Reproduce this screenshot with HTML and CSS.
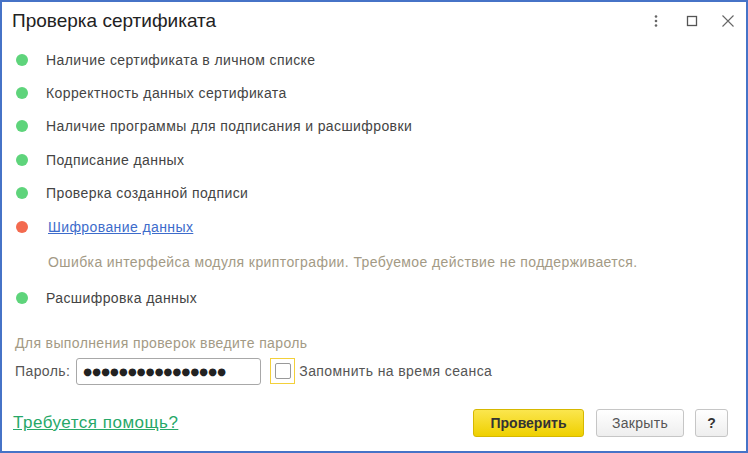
FILE: index.html
```html
<!DOCTYPE html>
<html lang="ru">
<head>
  <meta charset="UTF-8" />
  <title>Проверка сертификата</title>
  <link rel="stylesheet" href="styles.css">
</head>
<body>
  <div class="window">
    <div class="header">
      <h1>Проверка сертификата</h1>
      <div class="header-tools">
        <svg class="tool" width="14" height="14" viewBox="0 0 14 14">
          <circle cx="7" cy="2.5" r="1.3" fill="#666" />
          <circle cx="7" cy="7" r="1.3" fill="#666" />
          <circle cx="7" cy="11.5" r="1.3" fill="#666" />
        </svg>
        <svg class="tool" width="14" height="14" viewBox="0 0 14 14">
          <rect x="2.5" y="2.5" width="9" height="9" fill="none" stroke="#555" stroke-width="1.3" />
        </svg>
        <svg class="tool" width="14" height="14" viewBox="0 0 14 14">
          <path d="M1.5 1.5 L12.5 12.5 M12.5 1.5 L1.5 12.5" stroke="#666" stroke-width="1.1" />
        </svg>
      </div>
    </div>

    <div class="checks">
      <div class="check"><span class="dot ok"></span><span>Наличие сертификата в личном списке</span></div>
      <div class="check"><span class="dot ok"></span><span>Корректность данных сертификата</span></div>
      <div class="check"><span class="dot ok"></span><span>Наличие программы для подписания и расшифровки</span></div>
      <div class="check"><span class="dot ok"></span><span>Подписание данных</span></div>
      <div class="check"><span class="dot ok"></span><span>Проверка созданной подписи</span></div>
      <div class="check"><span class="dot fail"></span><a href="#" class="check-link">Шифрование данных</a></div>
      <div class="check-error">Ошибка интерфейса модуля криптографии. Требуемое действие не поддерживается.</div>
      <div class="check"><span class="dot ok"></span><span>Расшифровка данных</span></div>
    </div>

    <div class="password-block">
      <div class="hint">Для выполнения проверок введите пароль</div>
      <div class="password-row">
        <label for="pwd">Пароль:</label>
        <div class="password-field" id="pwd">●●●●●●●●●●●●●●●●</div>
        <div class="checkbox-wrap"><span class="checkbox"></span></div>
        <span class="checkbox-label">Запомнить на время сеанса</span>
      </div>
    </div>

    <div class="footer">
      <a href="#" class="help">Требуется помощь?</a>
      <div class="buttons">
        <button class="btn primary">Проверить</button>
        <button class="btn close">Закрыть</button>
        <button class="btn question">?</button>
      </div>
    </div>
  </div>
</body>
</html>
```

FILE: styles.css
```css
body {
  margin: 0;
  font-family: "Liberation Sans", Arial, sans-serif;
  background-color: #fff;
}
.window {
  width: 748px;
  height: 453px;
  box-sizing: border-box;
  border: 2px solid #4673c7;
  background-color: #fff;
  display: flex;
  flex-direction: column;
}
.header {
  display: flex;
  align-items: center;
  padding: 7px 0 0 10px;
  height: 24px;
}
h1 {
  margin: 0;
  font-size: 19px;
  font-weight: normal;
  line-height: 24px;
  color: #222;
  flex: 1;
}
.header-tools {
  display: flex;
  align-items: center;
  gap: 22px;
  margin-right: 11px;
}
.tool {
  display: block;
}
.checks {
  margin-top: 10px;
}
.check {
  display: flex;
  align-items: center;
  height: 33.4px;
  font-size: 14px;
  letter-spacing: 0.4px;
  color: #444;
}
.dot {
  width: 12px;
  height: 12px;
  border-radius: 50%;
  margin: 0 18px 0 14px;
  flex-shrink: 0;
}
.dot.ok {
  background-color: #5ed47b;
}
.dot.fail {
  background-color: #f36a4f;
}
.check-link {
  color: #3d6ccb;
  text-decoration: underline;
  margin-left: 2px;
}
.check-error {
  height: 38px;
  line-height: 38px;
  padding-left: 46px;
  font-size: 14px;
  letter-spacing: 0.4px;
  color: #a39a85;
}
.password-block {
  margin-top: 20px;
  padding-left: 13px;
}
.hint {
  font-size: 14px;
  letter-spacing: 0.37px;
  line-height: 16px;
  color: #a39a85;
}
.password-row {
  display: flex;
  align-items: center;
  margin-top: 7px;
  font-size: 14px;
  letter-spacing: 0.4px;
  color: #555;
}
.password-row label {
  margin-right: 6px;
}
.password-field {
  width: 185px;
  height: 27px;
  box-sizing: border-box;
  border: 1px solid #a8a8a8;
  border-radius: 3px;
  padding-left: 6px;
  font-family: "DejaVu Sans", sans-serif;
  font-size: 10px;
  letter-spacing: 0.2px;
  line-height: 25px;
  color: #222;
}
.checkbox-wrap {
  width: 25px;
  height: 26px;
  box-sizing: border-box;
  border: 1px solid #f3d03a;
  margin-left: 9px;
  display: flex;
  align-items: center;
  justify-content: center;
}
.checkbox {
  width: 14px;
  height: 14px;
  border: 1px solid #999;
  border-radius: 2px;
}
.checkbox-label {
  margin-left: 4px;
}
.footer {
  display: flex;
  align-items: center;
  justify-content: space-between;
  margin-top: 24px;
  padding: 0 18px 0 11px;
}
.help {
  font-size: 17px;
  letter-spacing: 0.5px;
  color: #27a868;
  text-decoration: underline;
}
.buttons {
  display: flex;
  gap: 12px;
}
.btn {
  height: 28px;
  border-radius: 3px;
  font-family: "Liberation Sans", Arial, sans-serif;
  font-size: 14px;
  padding: 0;
  cursor: pointer;
}
.btn.primary {
  width: 111px;
  background: linear-gradient(#fbe64e, #efd000);
  border: 1px solid #d6b800;
  color: #333;
  font-weight: bold;
}
.btn.close {
  width: 88px;
  background: linear-gradient(#fff, #eee);
  border: 1px solid #c6c6c6;
  color: #555;
  letter-spacing: 0.3px;
}
.btn.question {
  width: 33px;
  background: linear-gradient(#fff, #eee);
  border: 1px solid #c6c6c6;
  color: #333;
  font-weight: bold;
  margin-left: -1px;
}
```
